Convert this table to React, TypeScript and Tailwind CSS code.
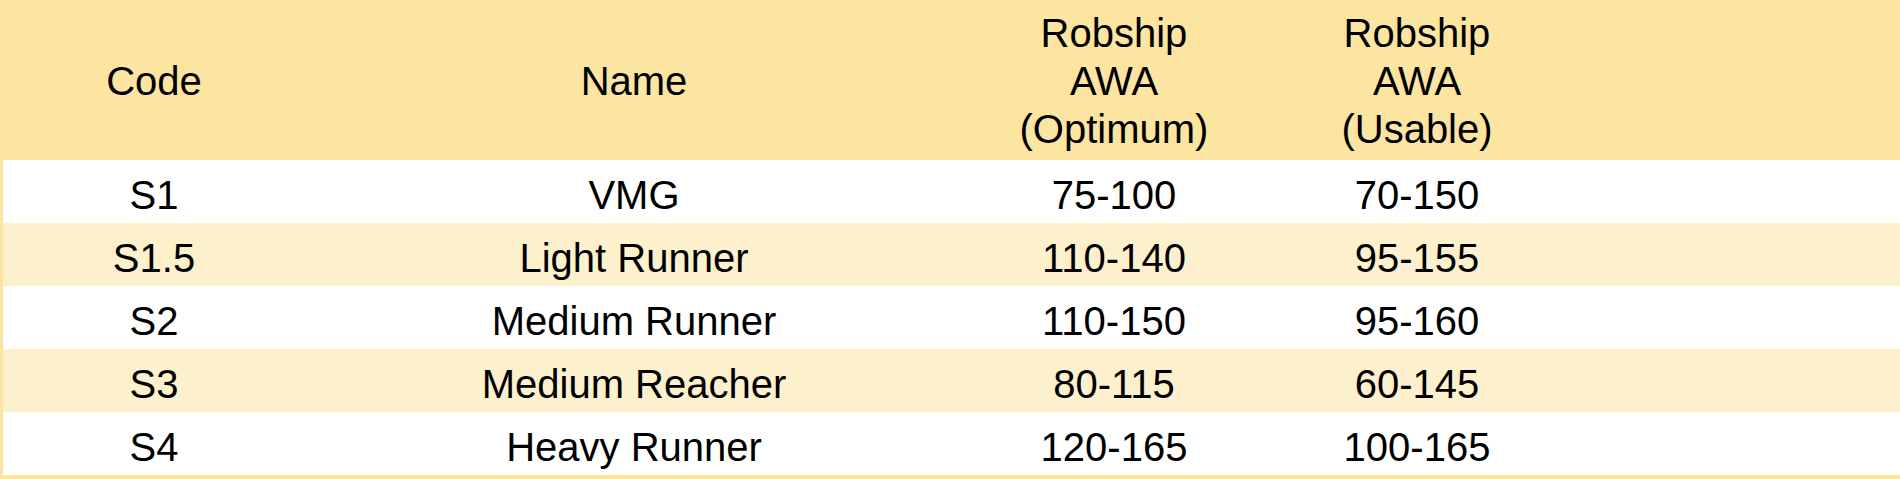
import React from 'react';

type Row = {
  code: string;
  name: string;
  optimum: string;
  usable: string;
};

const ROWS: Row[] = [
  { code: 'S1', name: 'VMG', optimum: '75-100', usable: '70-150' },
  { code: 'S1.5', name: 'Light Runner', optimum: '110-140', usable: '95-155' },
  { code: 'S2', name: 'Medium Runner', optimum: '110-150', usable: '95-160' },
  { code: 'S3', name: 'Medium Reacher', optimum: '80-115', usable: '60-145' },
  { code: 'S4', name: 'Heavy Runner', optimum: '120-165', usable: '100-165' },
];

const COLS = 'grid grid-cols-[302px_658px_302px_304px_1fr]';

export default function App() {
  return (
    <div className="w-[1900px] h-[479px] bg-white overflow-hidden font-['Liberation_Sans',Arial,sans-serif] text-[40px] leading-[48px] text-black">
      <div className="border-l-[3px] border-t-2 border-b-4 border-[#fce4a1]">
        {/* Header */}
        <div className={`${COLS} h-[158px] bg-[#fce4a1] items-center text-center`}>
          <div>Code</div>
          <div>Name</div>
          <div>
            Robship
            <br />
            AWA
            <br />
            (Optimum)
          </div>
          <div>
            Robship
            <br />
            AWA
            <br />
            (Usable)
          </div>
          <div />
        </div>

        {/* Body rows, alternating white / pale yellow */}
        {ROWS.map((row, i) => (
          <div
            key={row.code}
            className={`${COLS} h-[63px] items-center text-center pt-[6px] ${i % 2 === 1 ? 'bg-[#fdf0cc]' : 'bg-white'}`}
          >
            <div>{row.code}</div>
            <div>{row.name}</div>
            <div>{row.optimum}</div>
            <div>{row.usable}</div>
            <div />
          </div>
        ))}
      </div>
    </div>
  );
}
